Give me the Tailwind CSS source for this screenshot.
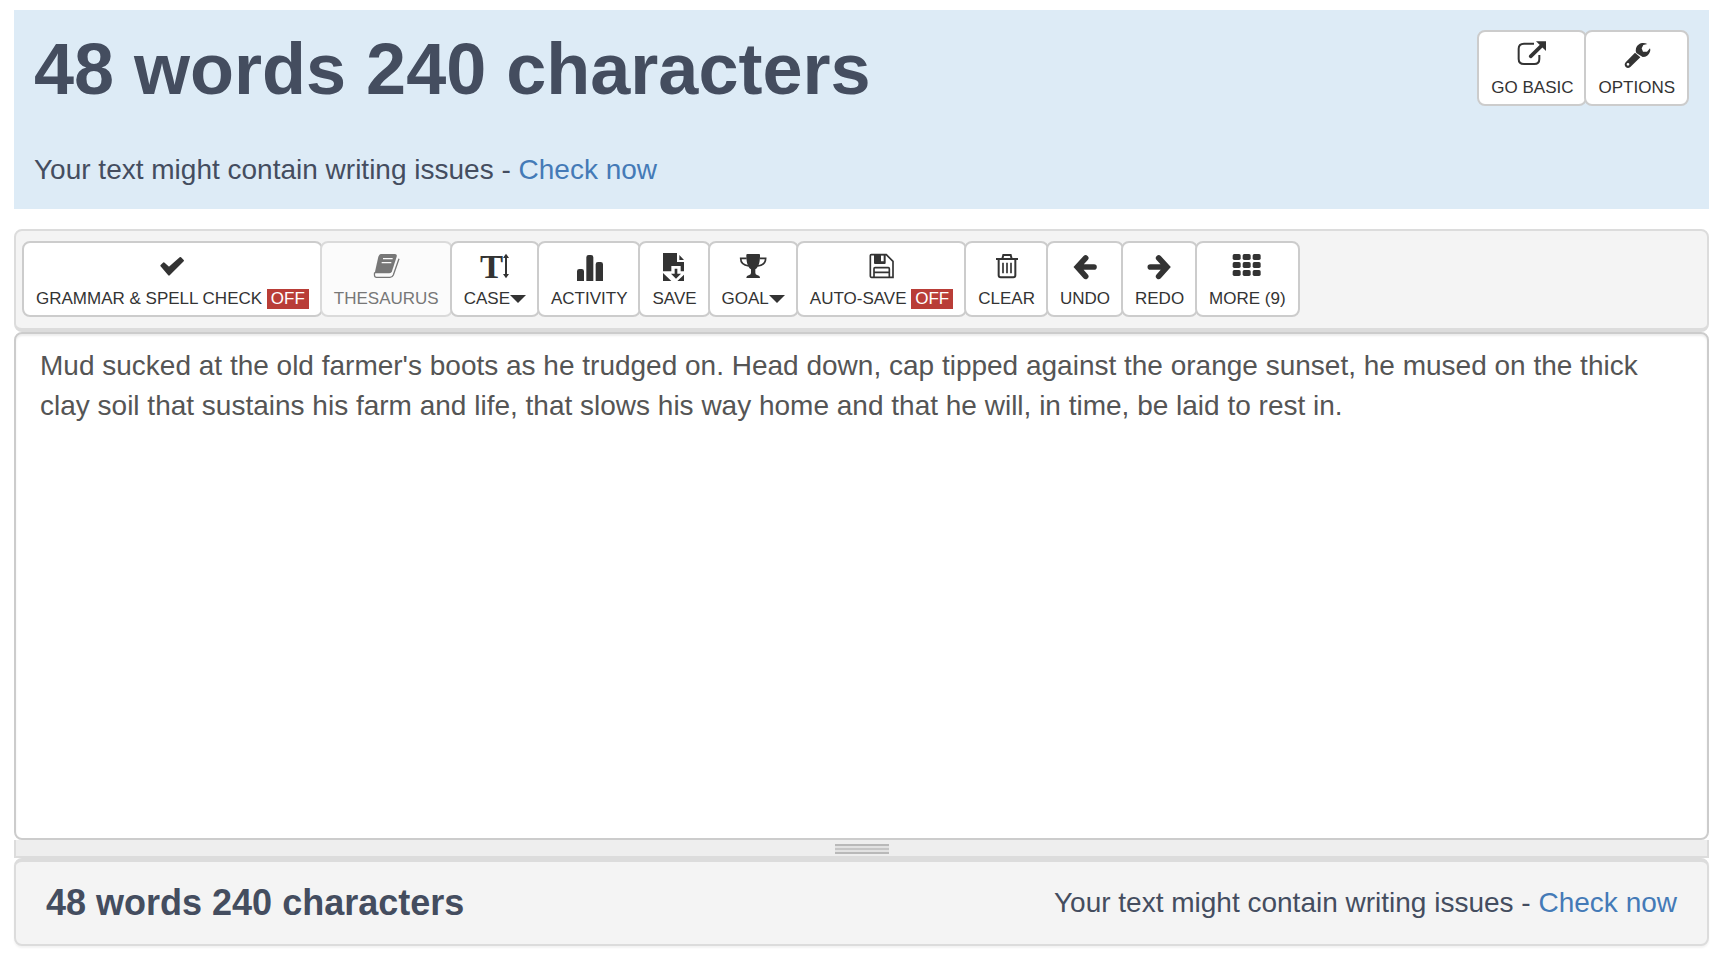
<!DOCTYPE html>
<html lang="en">
<head>
  <meta charset="UTF-8" />
  <meta name="viewport" content="width=device-width, initial-scale=1.0" />
  <title>Word Counter</title>
  <script src="https://cdn.jsdelivr.net/npm/@tailwindcss/browser@4"></script>
</head>
<body class="bg-white font-['Liberation_Sans',Arial,sans-serif] text-[#444d5f] min-h-screen pt-[10px] pl-[14px] pr-[17px]">

  <!-- Counter header -->
  <header class="flex justify-between items-start bg-[#ddebf6] px-5 py-[19px]">
    <div>
      <h1 class="text-[72px] leading-[80px] font-bold">48 words 240 characters</h1>
      <p class="mt-[41px] text-[28px] leading-[40px]">Your text might contain writing issues - <a href="#" class="text-[#447ab7]">Check now</a></p>
    </div>
    <div class="flex mt-px text-[#333]">
      <button type="button" class="h-[76px] px-3 pt-[9px] flex flex-col items-center gap-[5px] bg-white border-2 border-[#ccc] rounded-lg text-[17px] leading-6">
        <svg class="size-[30px]" viewBox="0 0 90 90" fill="none" stroke="currentColor">
          <path d="M51 8H21Q5 8 5 23V54Q5 69 21 69H52Q67 69 67 54V42" stroke-width="6" />
          <path d="M41 46L74 14" stroke-width="11" stroke-linecap="round" />
          <path d="M57 1H87V30Z" fill="currentColor" stroke="none" />
        </svg>
        <span>GO BASIC</span>
      </button>
      <button type="button" class="-ml-[3px] h-[76px] px-3 pt-[9px] flex flex-col items-center gap-[5px] bg-white border-2 border-[#ccc] rounded-lg text-[17px] leading-6">
        <svg class="size-[30px]" viewBox="0 0 90 90" fill="currentColor">
          <path d="M76 9C62 2 46 8 42 22Q40 30 43 36L62 48Q78 48 84 32Q86 27 84 22L75 32H63L59 22L64 12Z" />
          <path fill-rule="evenodd" d="M39 35L55 49L25 78Q18 84 11 78Q5 71 11 64ZM18 66A4 4 0 1 0 18 74A4 4 0 1 0 18 66Z" />
        </svg>
        <span>OPTIONS</span>
      </button>
    </div>
  </header>

  <main class="mt-5">
    <!-- Toolbar -->
    <div class="h-[103px] flex items-start bg-[#f4f4f4] border-2 border-b-4 border-[#dcdcdc] rounded-lg pl-[6px] pt-[10px] text-[#333]">
      <button type="button" class="h-[76px] px-3 pt-[9px] flex flex-col items-center gap-[5px] bg-white border-2 border-[#ccc] rounded-lg text-[17px] leading-6">
        <svg class="size-[30px]" viewBox="0 0 90 90" fill="currentColor" stroke="currentColor" stroke-width="6" stroke-linejoin="round">
          <path d="M13 41L20 34L36 48L70 18L78 26L36 68Z" />
        </svg>
        <span>GRAMMAR &amp; SPELL CHECK <span class="inline-block px-1 leading-5 bg-[#b93d37] text-white">OFF</span></span>
      </button>
      <button type="button" disabled class="-ml-[3px] h-[76px] px-3 pt-[9px] flex flex-col items-center gap-[5px] bg-[#fbfbfb] border-2 border-[#dadada] rounded-lg text-[17px] leading-6 text-[#777]">
        <svg class="size-[30px]" viewBox="0 0 90 90" fill="none" stroke="currentColor">
          <path d="M29 6H72Q79 7 77 14L63 58Q61 64 55 64H11L22 14Q24 8 29 6Z" fill="currentColor" stroke="none" />
          <path d="M11 61Q8 75 16 76H57Q64 76 67 69L84 20" stroke-width="4" />
          <path d="M36 20H65M32 32H61" stroke="#fbfbfb" stroke-width="4" />
        </svg>
        <span>THESAURUS</span>
      </button>
      <button type="button" class="-ml-[3px] h-[76px] px-3 pt-[9px] flex flex-col items-center gap-[5px] bg-white border-2 border-[#ccc] rounded-lg text-[17px] leading-6">
        <svg class="size-[30px] overflow-visible" viewBox="0 0 90 90" fill="currentColor">
          <text x="0" y="77" class="font-['Liberation_Serif',serif] font-bold text-[104px]">T</text>
          <path d="M78 5L87 18H81V66H87L78 79L69 66H75V18H69Z" />
        </svg>
        <span class="flex items-center">CASE<svg class="w-[16px] h-2" viewBox="0 0 16 8" fill="currentColor"><path d="M0 0H16L8 8Z" /></svg></span>
      </button>
      <button type="button" class="-ml-[3px] h-[76px] px-3 pt-[9px] flex flex-col items-center gap-[5px] bg-white border-2 border-[#ccc] rounded-lg text-[17px] leading-6">
        <svg class="size-[30px]" viewBox="0 0 90 90" fill="currentColor">
          <path d="M9 87V58Q9 51 16 51H23Q30 51 30 58V87ZM37 87V16Q37 9 44 9H51Q58 9 58 16V87ZM65 87V37Q65 30 72 30H80Q87 30 87 37V87Z" />
        </svg>
        <span>ACTIVITY</span>
      </button>
      <button type="button" class="-ml-[3px] h-[76px] px-3 pt-[9px] flex flex-col items-center gap-[5px] bg-white border-2 border-[#ccc] rounded-lg text-[17px] leading-6">
        <svg class="size-[30px]" viewBox="0 0 90 90" fill="currentColor">
          <path d="M9 3H51V30H72V58H62V42H34V58H9Z" />
          <path d="M58 9L72 24H58ZM9 63L34 87H9ZM72 68V87H52Z" />
          <path d="M44 50H52V65H63L48 80L33 65H44Z" />
        </svg>
        <span>SAVE</span>
      </button>
      <button type="button" class="-ml-[3px] h-[76px] px-3 pt-[9px] flex flex-col items-center gap-[5px] bg-white border-2 border-[#ccc] rounded-lg text-[17px] leading-6">
        <svg class="size-[30px]" viewBox="0 0 90 90" fill="currentColor">
          <path d="M25 8Q26 6 28 6H63Q66 6 66 8V14C65 34 62 44 52 52V62Q52 67 57 69Q66 71 66 78H25Q25 71 34 69Q39 67 39 62V52C29 44 26 34 25 14Z" />
          <path d="M26 19H8Q8 39 32 42M65 19H83Q83 39 59 42" fill="none" stroke="currentColor" stroke-width="5" />
        </svg>
        <span class="flex items-center">GOAL<svg class="w-[16px] h-2" viewBox="0 0 16 8" fill="currentColor"><path d="M0 0H16L8 8Z" /></svg></span>
      </button>
      <button type="button" class="-ml-[3px] h-[76px] px-3 pt-[9px] flex flex-col items-center gap-[5px] bg-white border-2 border-[#ccc] rounded-lg text-[17px] leading-6">
        <svg class="size-[30px]" viewBox="0 0 90 90" fill="none" stroke="currentColor" stroke-width="5">
          <path d="M13 8H58L78 28V76H13Q10 76 10 73V11Q10 8 13 8Z" />
          <path d="M21 76V50Q21 47 24 47H64Q67 47 67 50V76M21 61H67" />
          <path fill="currentColor" fill-rule="evenodd" stroke="none" d="M21 6H56V33Q56 36 53 36H24Q21 36 21 33ZM42 10V28H50V10Z" />
        </svg>
        <span>AUTO-SAVE <span class="inline-block px-1 leading-5 bg-[#b93d37] text-white">OFF</span></span>
      </button>
      <button type="button" class="-ml-[3px] h-[76px] px-3 pt-[9px] flex flex-col items-center gap-[5px] bg-white border-2 border-[#ccc] rounded-lg text-[17px] leading-6">
        <svg class="size-[30px]" viewBox="0 0 90 90" fill="none" stroke="currentColor" stroke-width="6">
          <path d="M12 21H78M31 20L34 9H56L59 20M20 22V70Q20 76 26 76H64Q70 76 70 70V22" />
          <path d="M33 32V64M45 32V64M57 32V64" stroke-width="5" />
        </svg>
        <span>CLEAR</span>
      </button>
      <button type="button" class="-ml-[3px] h-[76px] px-3 pt-[9px] flex flex-col items-center gap-[5px] bg-white border-2 border-[#ccc] rounded-lg text-[17px] leading-6">
        <svg class="size-[30px]" viewBox="0 0 90 90" fill="none" stroke="currentColor" stroke-width="17" stroke-linecap="round" stroke-linejoin="miter">
          <path d="M47 18L22 45L47 73M24 45H72" />
        </svg>
        <span>UNDO</span>
      </button>
      <button type="button" class="-ml-[3px] h-[76px] px-3 pt-[9px] flex flex-col items-center gap-[5px] bg-white border-2 border-[#ccc] rounded-lg text-[17px] leading-6">
        <svg class="size-[30px]" viewBox="0 0 90 90" fill="none" stroke="currentColor" stroke-width="17" stroke-linecap="round" stroke-linejoin="miter">
          <path d="M41 18L66 45L41 73M64 45H16" />
        </svg>
        <span>REDO</span>
      </button>
      <button type="button" class="-ml-[3px] h-[76px] px-3 pt-[9px] flex flex-col items-center gap-[5px] bg-white border-2 border-[#ccc] rounded-lg text-[17px] leading-6">
        <svg class="size-[30px]" viewBox="0 0 90 90" fill="currentColor">
          <rect x="2" y="6" width="24" height="18" rx="5" /><rect x="32" y="6" width="24" height="18" rx="5" /><rect x="62" y="6" width="24" height="18" rx="5" />
          <rect x="2" y="30" width="24" height="18" rx="5" /><rect x="32" y="30" width="24" height="18" rx="5" /><rect x="62" y="30" width="24" height="18" rx="5" />
          <rect x="2" y="54" width="24" height="18" rx="5" /><rect x="32" y="54" width="24" height="18" rx="5" /><rect x="62" y="54" width="24" height="18" rx="5" />
        </svg>
        <span>MORE (9)</span>
      </button>
    </div>

    <!-- Editor -->
    <textarea aria-label="Your text" spellcheck="false" class="block w-full h-[508px] resize-none outline-none bg-white border-2 border-[#ccc] rounded-lg shadow-[inset_0_2px_2px_rgba(0,0,0,0.075)] px-6 py-3 text-[28px] leading-[40px] text-[#555]">Mud sucked at the old farmer's boots as he trudged on. Head down, cap tipped against the orange sunset, he mused on the thick clay soil that sustains his farm and life, that slows his way home and that he will, in time, be laid to rest in.</textarea>

    <!-- Resize grip -->
    <div class="h-[18px] flex justify-center items-start pt-1 bg-[#eee] border-2 border-t-0 border-[#dcdcdc]">
      <div class="w-[54px] h-[10px] flex flex-col justify-center bg-[#e2e2e2] border-y-2 border-[#b9b9b9]">
        <div class="h-[2px] bg-[#c6c6c6]"></div>
      </div>
    </div>
  </main>

  <!-- Bottom summary -->
  <footer class="h-[88px] flex items-center justify-between bg-[#f4f4f4] border-2 border-t-4 border-[#dcdcdc] rounded-lg shadow-[0_2px_2px_rgba(0,0,0,0.05)] px-[30px]">
    <h2 class="text-[36px] leading-[40px] font-bold">48 words 240 characters</h2>
    <p class="text-[28px] leading-[40px]">Your text might contain writing issues - <a href="#" class="text-[#447ab7]">Check now</a></p>
  </footer>

</body>
</html>
